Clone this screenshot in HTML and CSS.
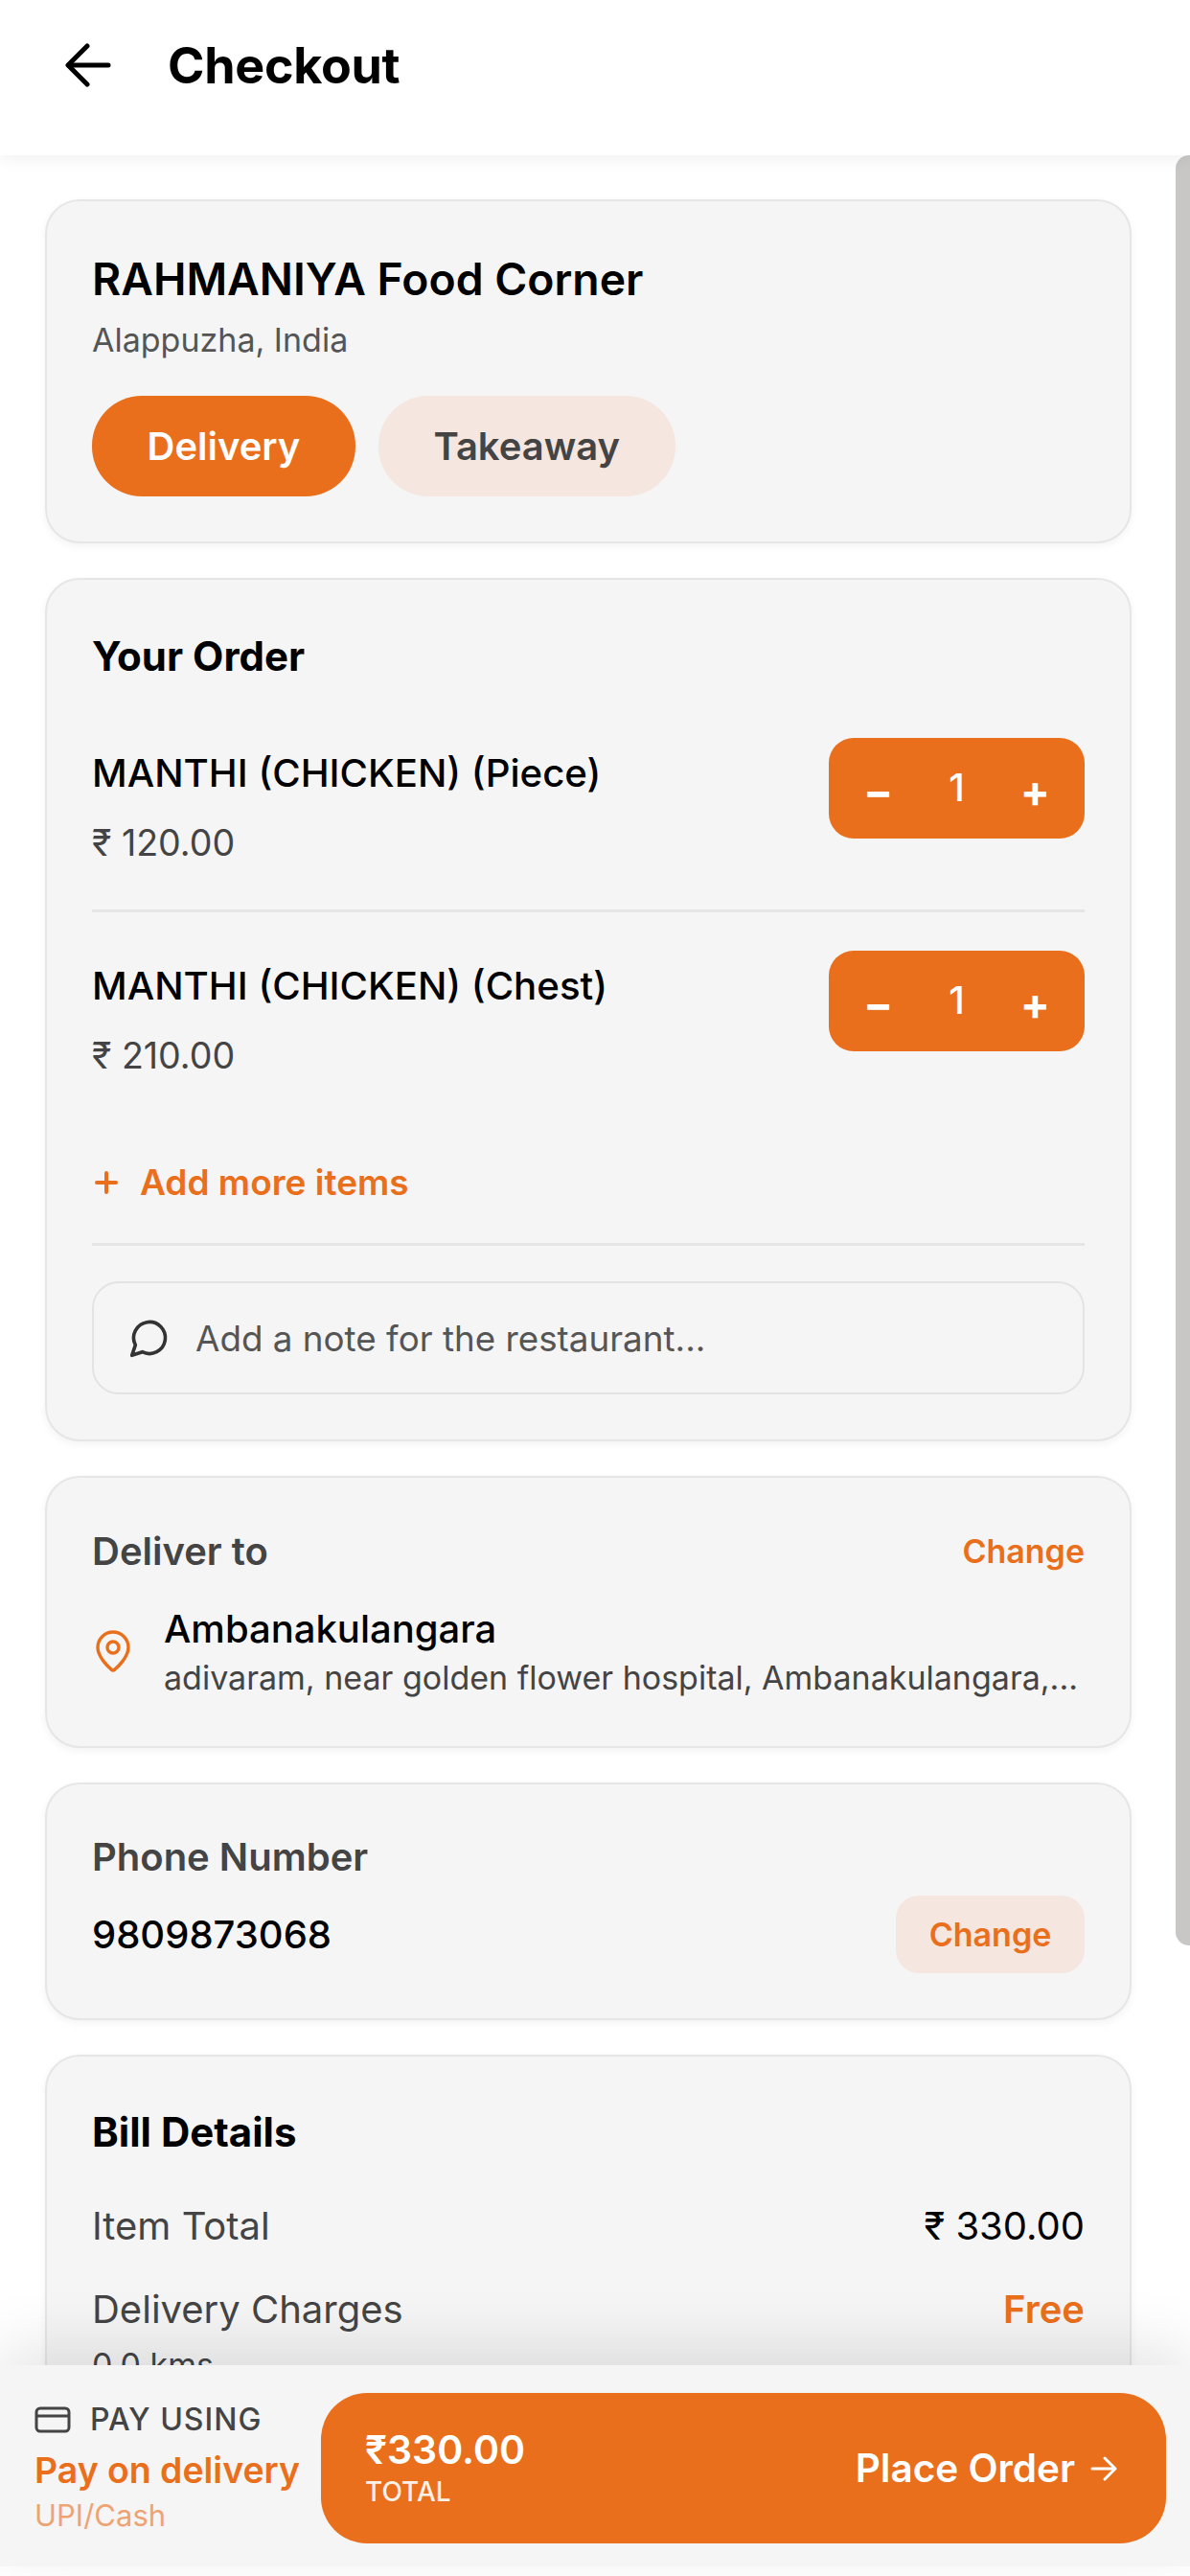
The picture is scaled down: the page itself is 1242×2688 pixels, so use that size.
FILE: index.html
```html
<!DOCTYPE html>
<html>
<head>
    <meta charset="UTF-8">
    <title>Checkout</title>
    <link rel="stylesheet" href="styles.css">
</head>
<body>
  <div class="header">
    <svg class="back" width="48" height="46" viewBox="0 0 48 46" fill="none" stroke="#000" stroke-width="5" stroke-linecap="round" stroke-linejoin="round">
      <path d="M45 23H4"/>
      <path d="M23 3L3 23l20 20"/>
    </svg>
    <h1>Checkout</h1>
  </div>

  <div class="main">
    <div class="scrollbar"></div>

    <div class="card shop">
      <h2>RAHMANIYA Food Corner</h2>
      <p class="city">Alappuzha, India</p>
      <div class="pills">
        <span class="pill active">Delivery</span>
        <span class="pill">Takeaway</span>
      </div>
    </div>

    <div class="card order">
      <h3>Your Order</h3>
      <div class="item">
        <div>
          <div class="item-name">MANTHI (CHICKEN) (Piece)</div>
          <div class="item-price">₹ 120.00</div>
        </div>
        <div class="stepper"><span class="step">−</span><span class="qty">1</span><span class="step">+</span></div>
      </div>
      <div class="item last">
        <div>
          <div class="item-name">MANTHI (CHICKEN) (Chest)</div>
          <div class="item-price">₹ 210.00</div>
        </div>
        <div class="stepper"><span class="step">−</span><span class="qty">1</span><span class="step">+</span></div>
      </div>
      <div class="add-more">
        <svg width="26" height="26" viewBox="0 0 26 26" fill="none" stroke="#e96f1c" stroke-width="4" stroke-linecap="round"><path d="M13 3v20M3 13h20"/></svg>
        <span>Add more items</span>
      </div>
      <div class="note">
        <svg width="44" height="44" viewBox="0 0 24 24" fill="none" stroke="#333" stroke-width="2" stroke-linecap="round" stroke-linejoin="round"><path d="M7.9 20A9 9 0 1 0 4 16.1L2 22z"/></svg>
        <span>Add a note for the restaurant...</span>
      </div>
    </div>

    <div class="card deliver">
      <div class="row">
        <span class="label">Deliver to</span>
        <span class="link">Change</span>
      </div>
      <div class="address">
        <svg class="pin" width="48" height="48" viewBox="0 0 24 24" fill="none" stroke="#e96f1c" stroke-width="1.7" stroke-linecap="round" stroke-linejoin="round"><path d="M20 10c0 5-5.5 10.2-7.4 11.8a1 1 0 0 1-1.2 0C9.5 20.2 4 15 4 10a8 8 0 0 1 16 0"/><circle cx="12" cy="10" r="3"/></svg>
        <div class="address-text">
          <div class="address-name">Ambanakulangara</div>
          <div class="address-line">adivaram, near golden flower hospital, Ambanakulangara,...</div>
        </div>
      </div>
    </div>

    <div class="card phone">
      <div class="label">Phone Number</div>
      <div class="row">
        <span class="phone-number">9809873068</span>
        <span class="change-btn">Change</span>
      </div>
    </div>

    <div class="card bill">
      <h3>Bill Details</h3>
      <div class="row bill-row">
        <span class="bill-label">Item Total</span>
        <span class="bill-value">₹ 330.00</span>
      </div>
      <div class="row bill-row">
        <span class="bill-label">Delivery Charges</span>
        <span class="bill-free">Free</span>
      </div>
      <div class="kms">0.0 kms</div>
    </div>
  </div>

  <div class="footer">
    <div class="pay">
      <div class="pay-title">
        <svg width="38" height="28" viewBox="0 0 38 28" fill="none" stroke="#444" stroke-width="3" stroke-linejoin="round"><rect x="2" y="2" width="34" height="24" rx="4"/><path d="M2 10h34"/></svg>
        <span>PAY USING</span>
      </div>
      <div class="pay-method">Pay on delivery</div>
      <div class="pay-sub">UPI/Cash</div>
    </div>
    <div class="place-order">
      <div class="total">
        <div class="total-amount">₹330.00</div>
        <div class="total-label">TOTAL</div>
      </div>
      <div class="place-text">
        <span>Place Order</span>
        <svg width="32" height="32" viewBox="0 0 32 32" fill="none" stroke="#fff" stroke-width="3" stroke-linecap="round" stroke-linejoin="round"><path d="M4 16h24M17 5l11 11-11 11"/></svg>
      </div>
    </div>
  </div>
</body>
</html>
```

FILE: styles.css
```css
html, body {
    margin: 0;
    height: 100%;
}
body {
    width: 1242px;
    height: 2688px;
    overflow: hidden;
    display: flex;
    flex-direction: column;
    background: #fff;
    font-family: Inter, "Noto Sans", sans-serif;
    color: #000;
}
h1, h2, h3, p {
    margin: 0;
}

/* header */
.header {
    height: 162px;
    flex-shrink: 0;
    box-sizing: border-box;
    padding: 0 0 26px 68px;
    display: flex;
    align-items: center;
    gap: 59px;
    background: #fff;
    box-shadow: 0 4px 16px rgba(0, 0, 0, 0.06);
    position: relative;
    z-index: 2;
}
.header h1 {
    font-size: 52px;
    font-weight: 700;
    letter-spacing: -0.3px;
}

/* scroll area */
.main {
    flex: 1;
    min-height: 0;
    overflow: hidden;
    position: relative;
    box-sizing: border-box;
    padding: 46px 61px 0 47px;
    display: flex;
    flex-direction: column;
    gap: 36px;
}
.scrollbar {
    position: absolute;
    top: 0;
    right: 0;
    width: 15px;
    height: 1868px;
    background: #c9c6c6;
    border-radius: 14px 0 0 14px;
}
.card {
    flex-shrink: 0;
    box-sizing: border-box;
    background: #f5f5f5;
    border: 2px solid #e6e6e6;
    border-radius: 36px;
    padding: 53px 47px 48px;
    box-shadow: 0 3px 8px rgba(0, 0, 0, 0.05);
}
.row {
    display: flex;
    justify-content: space-between;
    align-items: center;
}

/* restaurant */
.shop {
    height: 359px;
    padding-top: 52px;
}
.shop h2 {
    font-size: 46.3px;
    font-weight: 600;
    line-height: 58px;
}
.city {
    font-size: 34px;
    color: #555;
    line-height: 42px;
    margin-top: 14px;
}
.pills {
    display: flex;
    gap: 24px;
    margin-top: 37px;
}
.pill {
    height: 105px;
    padding: 0 57.5px;
    border-radius: 52px;
    background: #f5e6df;
    color: #444;
    font-size: 40px;
    font-weight: 600;
    display: flex;
    align-items: center;
}
.pill.active {
    background: #e96f1c;
    color: #fff;
}

/* order */
.order {
    height: 901px;
}
.order h3, .bill h3 {
    font-size: 42px;
    font-weight: 700;
    line-height: 54px;
}
.item {
    display: flex;
    justify-content: space-between;
    align-items: flex-start;
    margin-top: 58px;
    height: 179px;
    border-bottom: 3px solid #e5e5e5;
}
.item.last {
    margin-top: 40px;
    border-bottom: none;
    height: 190px;
}
.item-name {
    font-size: 40.2px;
    font-weight: 550;
    line-height: 50px;
    margin-top: 12px;
}
.item-price {
    font-size: 37.6px;
    color: #444;
    line-height: 48px;
    margin-top: 24px;
}
.stepper {
    width: 267px;
    height: 105px;
    border-radius: 26px;
    background: #e96f1c;
    color: #fff;
    display: flex;
    justify-content: space-between;
    align-items: center;
    box-sizing: border-box;
    padding: 0 36px;
    font-size: 40px;
}
.step {
    font-weight: 700;
    font-size: 46px;
    margin-top: 4px;
}
.qty {
    font-weight: 500;
    margin-top: -2px;
}
.add-more {
    display: flex;
    align-items: center;
    gap: 22px;
    margin-top: 29px;
    padding-left: 2px;
    padding-bottom: 40px;
    border-bottom: 3px solid #e5e5e5;
    color: #e96f1c;
    font-size: 37px;
    font-weight: 600;
    line-height: 46px;
}
.note {
    height: 118px;
    box-sizing: border-box;
    margin-top: 37px;
    border: 2px solid #e3e3e3;
    border-radius: 28px;
    padding: 0 36px;
    display: flex;
    align-items: center;
    gap: 26px;
    font-size: 36.8px;
    color: #555;
}

/* address */
.deliver {
    height: 284px;
}
.label {
    font-size: 40px;
    font-weight: 600;
    color: #444;
    line-height: 48px;
}
.link {
    font-size: 34px;
    font-weight: 600;
    color: #e96f1c;
    margin-top: -2px;
}
.address {
    display: flex;
    align-items: center;
    gap: 29px;
    margin-top: 32px;
}
.pin {
    margin: -2px 0 0 -2px;
}
.address-text {
    min-width: 0;
    flex: 1;
}
.address-name {
    font-size: 40px;
    font-weight: 500;
    line-height: 50px;
}
.address-line {
    font-size: 34px;
    color: #444;
    line-height: 44px;
    margin-top: 4px;
    white-space: nowrap;
}

/* phone */
.phone {
    height: 248px;
    padding-top: 52px;
}
.phone .row {
    margin-top: 16px;
}
.phone-number {
    font-size: 40px;
    font-weight: 500;
}
.change-btn {
    height: 81px;
    width: 197px;
    border-radius: 24px;
    background: #f5e6df;
    color: #e96f1c;
    font-size: 34px;
    font-weight: 600;
    display: flex;
    align-items: center;
    justify-content: center;
}

/* bill */
.bill {
    padding-top: 52px;
}
.bill h3 {
    margin-bottom: 46px;
}
.bill-row {
    margin-top: 37px;
    line-height: 50px;
}
.bill-label {
    font-size: 40px;
    color: #444;
}
.bill-value {
    font-size: 40px;
}
.bill-free {
    font-size: 40px;
    font-weight: 600;
    color: #e96f1c;
}
.kms {
    font-size: 34px;
    color: #444;
    margin-top: 12px;
}

/* footer */
.footer {
    flex-shrink: 0;
    height: 210px;
    margin-bottom: 10px;
    box-sizing: border-box;
    background: #f5f5f5;
    padding: 29px 25px 24px 36px;
    display: flex;
    gap: 24px;
    position: relative;
    z-index: 2;
    box-shadow: 0 -20px 60px rgba(0, 0, 0, 0.1);
}
.pay {
    width: 275px;
    flex-shrink: 0;
}
.pay-title {
    display: flex;
    align-items: center;
    gap: 20px;
    font-size: 32px;
    font-weight: 500;
    color: #444;
    letter-spacing: 1px;
    line-height: 40px;
    margin-top: 8px;
}
.pay-method {
    font-size: 37.4px;
    font-weight: 600;
    color: #e96f1c;
    line-height: 48px;
    margin-top: 9px;
    white-space: nowrap;
}
.pay-sub {
    font-size: 31px;
    color: #e96f1c;
    opacity: 0.6;
    line-height: 40px;
    margin-top: 3px;
}
.place-order {
    flex: 1;
    border-radius: 48px;
    background: #e96f1c;
    color: #fff;
    display: flex;
    justify-content: space-between;
    align-items: center;
    padding: 0 49px 0 46px;
}
.total {
    padding-bottom: 6px;
}
.total-amount {
    font-size: 41px;
    font-weight: 600;
    line-height: 54px;
}
.total-label {
    font-size: 28px;
    font-weight: 500;
    line-height: 34px;
    opacity: 0.9;
}
.place-text {
    display: flex;
    align-items: center;
    gap: 14px;
    font-size: 40.5px;
    font-weight: 600;
}
```
